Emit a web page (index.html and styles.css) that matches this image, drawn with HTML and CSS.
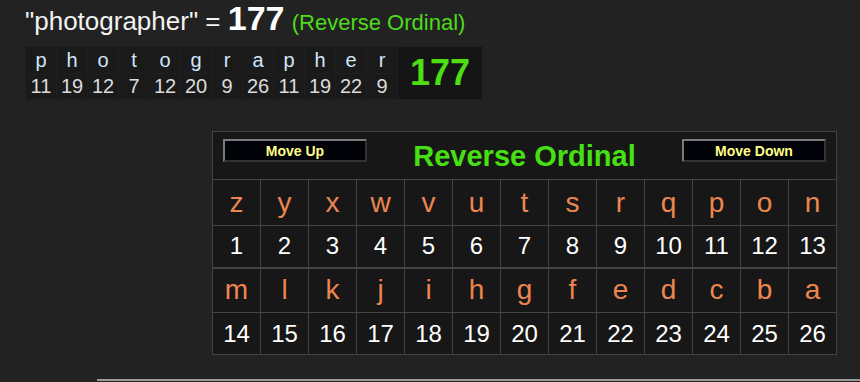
FILE: index.html
```html
<html>
<head>
<link rel="stylesheet" href="styles.css">
</head>
<body>

<div class="page">
  <div class="result">"photographer" = <span class="sum">177</span> <span class="cipher-name">(Reverse Ordinal)</span></div>

  <table class="word">
    <tr>
      <td class="ltr">p</td><td class="ltr">h</td><td class="ltr">o</td><td class="ltr">t</td>
      <td class="ltr">o</td><td class="ltr">g</td><td class="ltr">r</td><td class="ltr">a</td>
      <td class="ltr">p</td><td class="ltr">h</td><td class="ltr">e</td><td class="ltr">r</td>
      <td class="total" rowspan="2">177</td>
    </tr>
    <tr>
      <td>11</td><td>19</td><td>12</td><td>7</td>
      <td>12</td><td>20</td><td>9</td><td>26</td>
      <td>11</td><td>19</td><td>22</td><td>9</td>
    </tr>
  </table>

  <table class="chart">
    <tr>
      <td class="head" colspan="13">
        <div class="head-bar">
          <button class="move">Move Up</button>
          <span class="chart-title">Reverse Ordinal</span>
          <button class="move">Move Down</button>
        </div>
      </td>
    </tr>
    <tr class="letters">
      <td>z</td><td>y</td><td>x</td><td>w</td><td>v</td><td>u</td><td>t</td>
      <td>s</td><td>r</td><td>q</td><td>p</td><td>o</td><td>n</td>
    </tr>
    <tr class="values">
      <td>1</td><td>2</td><td>3</td><td>4</td><td>5</td><td>6</td><td>7</td>
      <td>8</td><td>9</td><td>10</td><td>11</td><td>12</td><td>13</td>
    </tr>
    <tr class="letters second">
      <td>m</td><td>l</td><td>k</td><td>j</td><td>i</td><td>h</td><td>g</td>
      <td>f</td><td>e</td><td>d</td><td>c</td><td>b</td><td>a</td>
    </tr>
    <tr class="values">
      <td>14</td><td>15</td><td>16</td><td>17</td><td>18</td><td>19</td><td>20</td>
      <td>21</td><td>22</td><td>23</td><td>24</td><td>25</td><td>26</td>
    </tr>
  </table>

  <div class="next-box"></div>
</div>

</body>
</html>
```

FILE: styles.css
```css
body {
  margin: 0;
  background-color: #222222;
  font-family: "Liberation Sans", Arial, sans-serif;
  color: white;
  overflow: hidden;
}

.page {
  padding: 0 0 0 25px;
}

.result {
  font-size: 26px;
  line-height: 36px;
  color: #f2f2f2;
}

.sum {
  font-size: 34px;
  font-weight: bold;
  color: white;
}

.cipher-name {
  font-size: 22px;
  color: #4ddb1c;
}

.word {
  margin-top: 5px;
  border-spacing: 1px;
  background-color: #1f1f1f;
}

.word td {
  background-color: #1a1a1a;
  width: 30px;
  height: 25px;
  padding: 0;
  text-align: center;
  font-size: 20px;
  color: #dcdcdc;
}

.word td.ltr {
  color: #cfe6fb;
  height: 26px;
}

.word td.total {
  width: 84px;
  background-color: #151515;
  color: #4ddf14;
  font-size: 36px;
  font-weight: bold;
}

.chart {
  margin: 31px 0 0 187px;
  border-collapse: collapse;
  background-color: #171717;
}

.chart td {
  border: 1px solid #444444;
  width: 47px;
  padding: 0;
  text-align: center;
}

.chart td.head {
  height: 48px;
  vertical-align: top;
}

.head-bar {
  display: flex;
  justify-content: space-between;
  align-items: flex-start;
  padding: 7px 10px 0 10px;
}

.chart-title {
  margin-top: 1px;
  font-size: 29px;
  font-weight: bold;
  color: #47e014;
}

.move {
  width: 144px;
  height: 23px;
  background-color: #010108;
  border: 2px solid;
  border-color: #7a7a7a #333333 #333333 #7a7a7a;
  color: #ffff85;
  font-family: "Liberation Sans", Arial, sans-serif;
  font-size: 14px;
  font-weight: bold;
  padding: 0;
}

.letters td {
  height: 46px;
  font-size: 28px;
  color: #ec8650;
}

.letters.second td {
  border-top-width: 2px;
  height: 45px;
}

.values td {
  height: 42px;
  font-size: 24px;
  color: white;
}

.next-box {
  margin: 24px 0 0 72px;
  height: 40px;
  border-top: 2px solid #9a9a9a;
}
```
